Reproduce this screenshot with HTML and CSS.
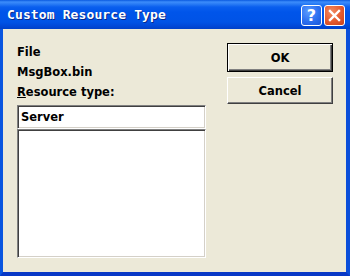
FILE: index.html
```html
<!DOCTYPE html>
<html>
<head>
<meta charset="utf-8">
<link rel="stylesheet" href="styles.css">
</head>
<body>
<div class="window">
  <div class="titlebar">
    <span class="title">Custom Resource Type</span>
    <div class="tbtns">
      <span class="tb help">?</span>
      <span class="tb close">
        <svg width="21" height="21" viewBox="0 0 21 21"><path d="M6 6 L15 15 M15 6 L6 15" stroke="#fff" stroke-width="2.4" stroke-linecap="square"/></svg>
      </span>
    </div>
  </div>
  <div class="frame">
    <div class="client">
      <div class="left">
        <div class="label">File</div>
        <div class="label">MsgBox.bin</div>
        <div class="label"><u>R</u>esource type:</div>
        <div class="edit">Server</div>
        <div class="list"></div>
      </div>
      <div class="right">
        <button class="btn default">OK</button>
        <button class="btn">Cancel</button>
      </div>
    </div>
  </div>
</div>
</body>
</html>
```
FILE: styles.css
```css
html, body {
  margin: 0;
  padding: 0;
  background: #ECE9D8;
}
.window {
  width: 350px;
  height: 276px;
  display: flex;
  flex-direction: column;
  background: #0748D6;
}
.titlebar {
  height: 29px;
  flex: none;
  display: flex;
  align-items: flex-start;
  justify-content: space-between;
  background: linear-gradient(to bottom, #0A5AE0 0px, #3C8DFB 2px, #2A7CF5 4px, #0A5FEE 7px, #0055EA 12px, #0053E6 22px, #0048D8 26px, #0040C8 29px);
}
.title {
  font-family: "DejaVu Sans Mono", monospace;
  font-weight: bold;
  font-size: 13px;
  letter-spacing: 0.12px;
  color: #fff;
  text-shadow: 1px 1px 0 #0A2A8A;
  margin: 6px 0 0 7px;
  line-height: 18px;
}
.tbtns {
  display: flex;
  gap: 2px;
  margin: 5px 5px 0 0;
}
.tb {
  width: 21px;
  height: 21px;
  box-sizing: border-box;
  border: 1px solid #fff;
  border-radius: 3px;
  display: flex;
  align-items: center;
  justify-content: center;
  color: #fff;
}
.tb svg { display: block; margin: -1px; }
.help {
  background: radial-gradient(circle at 35% 30%, #5C9DFF 0%, #2C6FF0 55%, #1A55D8 100%);
  font-family: "DejaVu Sans", sans-serif;
  font-weight: bold;
  font-size: 16px;
  line-height: 19px;
}
.close {
  background: radial-gradient(circle at 35% 30%, #F28A62 0%, #E45A2E 55%, #C8401A 100%);
}
.frame {
  flex: 1;
  display: flex;
  border-left: 3px solid #0A56E0;
  border-right: 4px solid #0A4EDA;
  border-bottom: 4px solid #0838C6;
}
.client {
  flex: 1;
  background: #ECE9D8;
  display: flex;
  font-family: "DejaVu Sans", sans-serif;
  font-weight: bold;
  font-size: 11.5px;
  color: #000;
}
.left {
  width: 189px;
  margin-left: 14px;
  padding-top: 13px;
  display: flex;
  flex-direction: column;
}
.label {
  line-height: 20px;
  height: 20px;
}
.edit {
  margin-top: 3px;
  height: 24px;
  box-sizing: border-box;
  background: #FFFFFF;
  border-style: solid;
  border-width: 1px;
  border-color: #808080 #FFFFFF #FFFFFF #808080;
  box-shadow: inset 1px 1px 0 #404040, inset -1px -1px 0 #D4D0C8;
  padding: 2px 3px;
  line-height: 18px;
}
.list {
  height: 129px;
  box-sizing: border-box;
  background: #FFFFFF;
  border-style: solid;
  border-width: 1px;
  border-color: #808080 #FFFFFF #FFFFFF #808080;
  box-shadow: inset 1px 1px 0 #404040, inset -1px -1px 0 #D4D0C8;
}
.right {
  margin-left: 21px;
  padding-top: 14px;
  display: flex;
  flex-direction: column;
  gap: 5px;
}
.btn {
  width: 106px;
  height: 27px;
  box-sizing: border-box;
  background: #ECE9D8;
  font-family: "DejaVu Sans", sans-serif;
  font-weight: bold;
  font-size: 11.5px;
  color: #000;
  padding: 0;
  border-style: solid;
  border-width: 1px;
  border-color: #FFFFFF #404040 #404040 #FFFFFF;
  box-shadow: inset -1px -1px 0 #808080;
}
.btn.default {
  height: 29px;
  border-color: #000;
  box-shadow: inset 1px 1px 0 #FFFFFF, inset -1px -1px 0 #404040, inset -2px -2px 0 #808080;
}
```
